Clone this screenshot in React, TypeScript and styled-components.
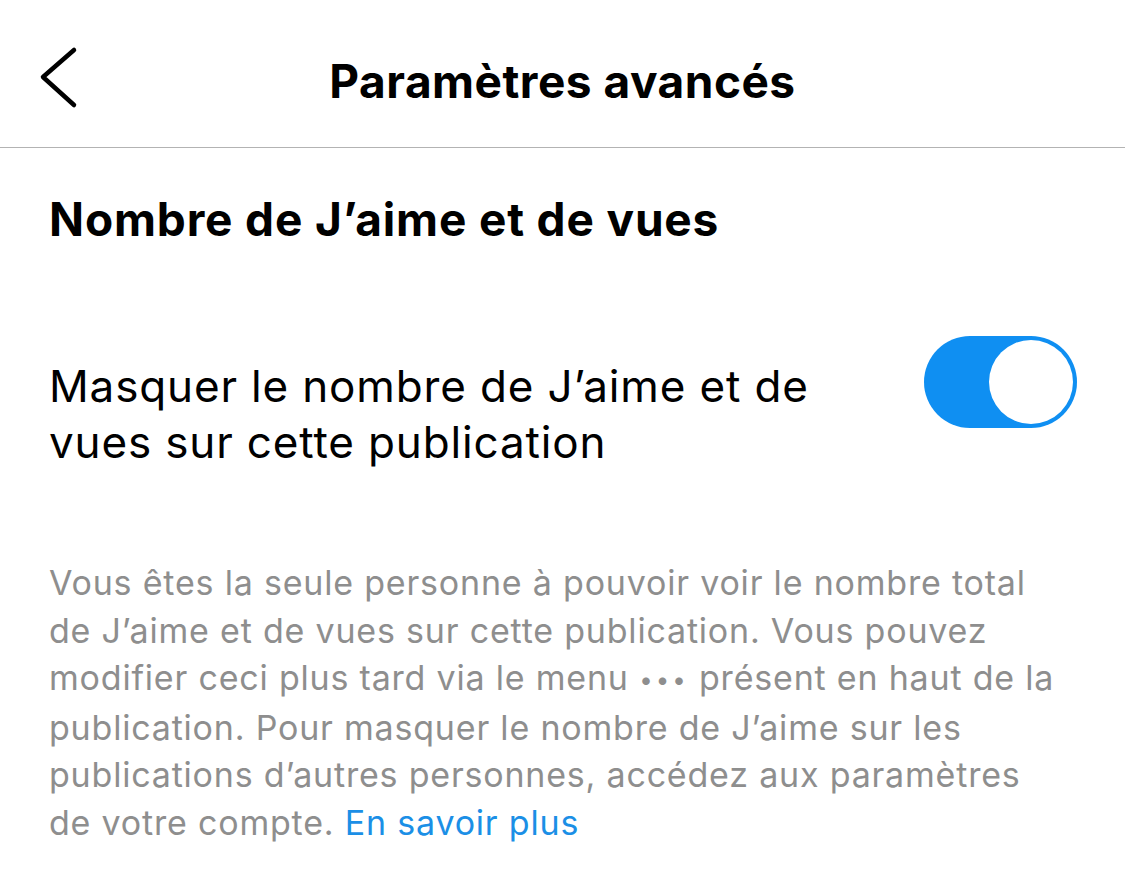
import React from "react";
import styled, { createGlobalStyle } from "styled-components";

const Global = createGlobalStyle`
  html, body { margin: 0; padding: 0; background: #fff; }
  body { font-family: Inter, "Noto Sans", sans-serif; color: #000; -webkit-font-smoothing: antialiased; }
`;

const Page = styled.div`
  width: 1125px;
  height: 886px;
  background: #fff;
  overflow: hidden;
`;

const Header = styled.header`
  position: relative;
  height: 148px;
  display: flex;
  justify-content: center;
  align-items: flex-start;
  padding-top: 53px;
  border-bottom: 1.5px solid #b3b3b3;
  box-sizing: border-box;
`;

const BackButton = styled.button`
  position: absolute;
  left: 36px;
  top: 44px;
  width: 46px;
  height: 66px;
  border: 0;
  padding: 0;
  background: transparent;
  display: block;
`;

const Title = styled.h1`
  margin: 0;
  font-size: 46px;
  line-height: 56px;
  font-weight: 700;
  letter-spacing: 0.5px;
`;

const Content = styled.main`
  padding: 0 48px 0 49px;
`;

const SectionTitle = styled.h2`
  margin: 0;
  padding-top: 43px;
  font-size: 46px;
  line-height: 56px;
  font-weight: 700;
  letter-spacing: 0.85px;
`;

const Row = styled.div`
  display: flex;
  align-items: flex-start;
  justify-content: space-between;
  margin-top: 89px;
`;

const RowLabel = styled.div`
  margin-top: 22px;
  font-size: 44px;
  line-height: 56px;
  font-weight: 400;
  letter-spacing: 0.85px;
`;

const Track = styled.div<{ $on: boolean }>`
  width: 153px;
  height: 92px;
  border-radius: 46px;
  background: ${(p) => (p.$on ? "#0f8ff2" : "#d9d9d9")};
  display: flex;
  align-items: center;
  justify-content: ${(p) => (p.$on ? "flex-end" : "flex-start")};
  padding: 0 4px;
  box-sizing: border-box;
  flex-shrink: 0;
`;

const Knob = styled.div`
  width: 84px;
  height: 84px;
  border-radius: 50%;
  background: #fff;
`;

const Description = styled.p`
  margin: 0;
  margin-top: 89px;
  font-size: 34px;
  line-height: 47.6px;
  color: #8e8e8e;
  letter-spacing: 0.8px;
`;

const Dots = styled.span`
  font-size: 24px;
  letter-spacing: 3px;
  vertical-align: 2px;
`;

const Link = styled.a`
  color: #1b8fe6;
  text-decoration: none;
`;

export default function App() {
  return (
    <Page>
      <Global />
      <Header>
        <BackButton aria-label="Retour">
          <svg width="46" height="66" viewBox="0 0 46 66">
            <path d="M38 6 L7 33 L38 61" fill="none" stroke="#000" strokeWidth="4.5" strokeLinecap="round" strokeLinejoin="round" />
          </svg>
        </BackButton>
        <Title>Paramètres avancés</Title>
      </Header>
      <Content>
        <SectionTitle>Nombre de J’aime et de vues</SectionTitle>
        <Row>
          <RowLabel>
            Masquer le nombre de J’aime et de
            <br />
            vues sur cette publication
          </RowLabel>
          <Track $on={true}>
            <Knob />
          </Track>
        </Row>
        <Description>
          Vous êtes la seule personne à pouvoir voir le nombre total
          <br />
          de J’aime et de vues sur cette publication. Vous pouvez
          <br />
          modifier ceci plus tard via le menu <Dots>•••</Dots> présent en haut de la
          <br />
          publication. Pour masquer le nombre de J’aime sur les
          <br />
          publications d’autres personnes, accédez aux paramètres
          <br />
          de votre compte. <Link href="#">En savoir plus</Link>
        </Description>
      </Content>
    </Page>
  );
}
